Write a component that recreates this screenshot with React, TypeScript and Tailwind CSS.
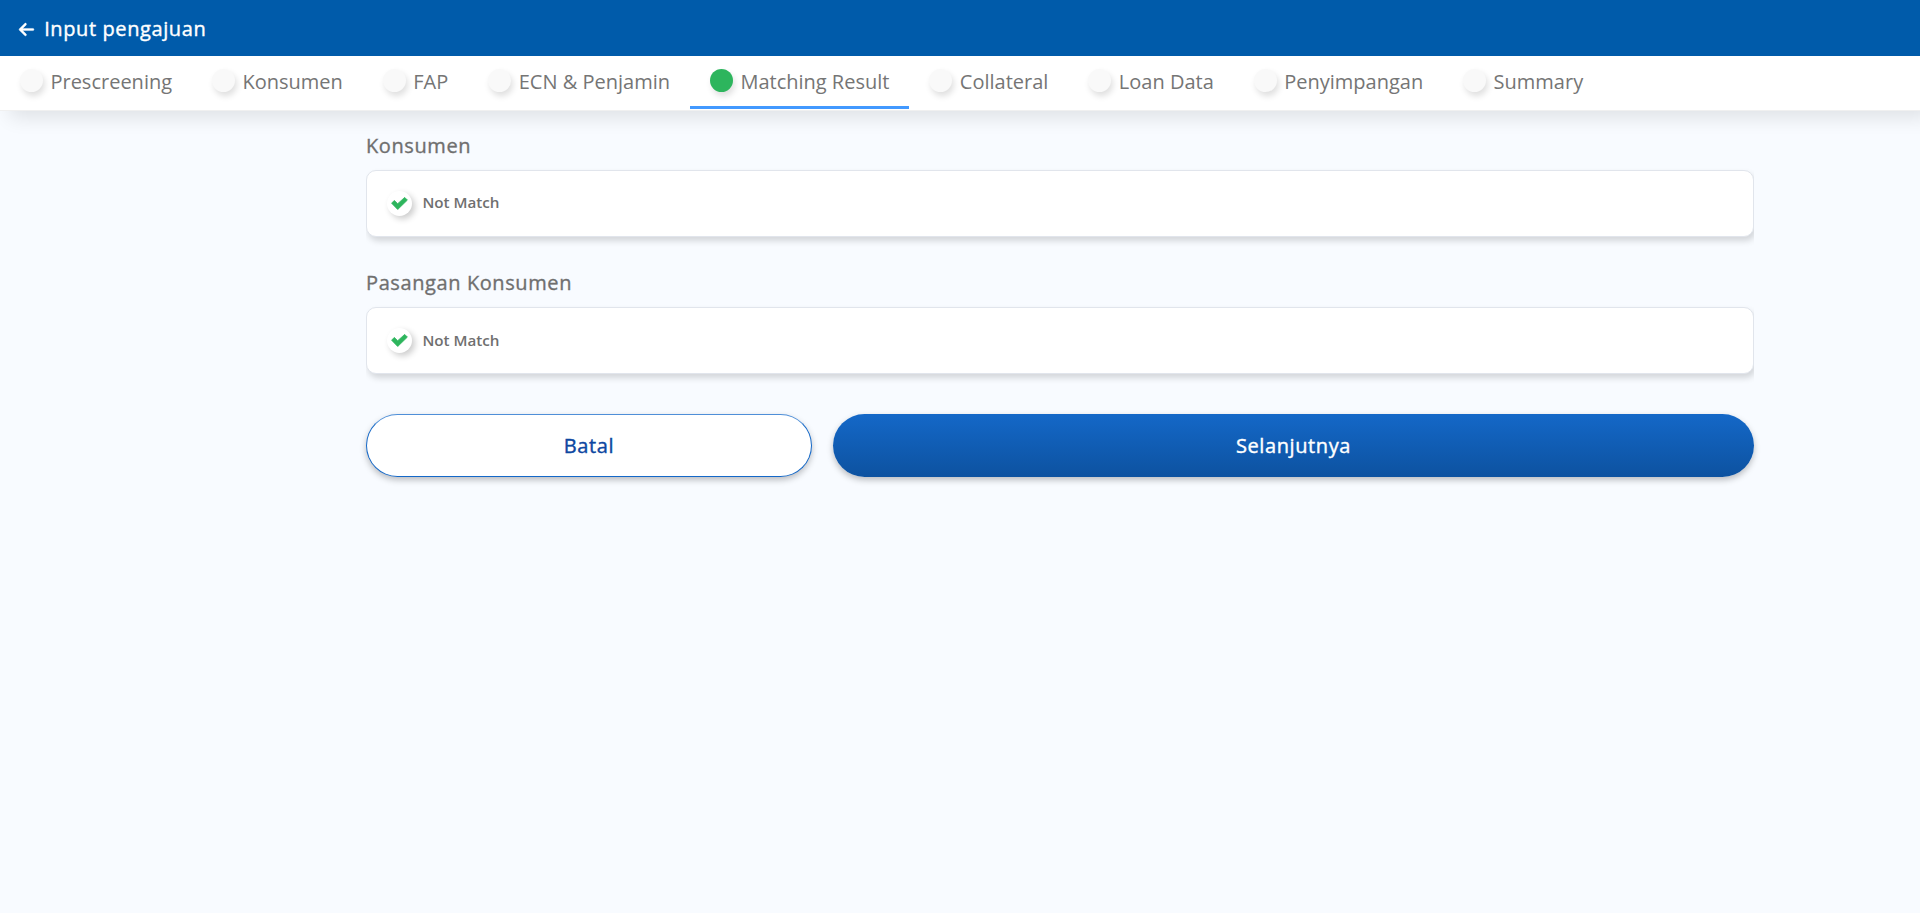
import { FaArrowLeft } from "react-icons/fa6";

const steps = [
  "Prescreening",
  "Konsumen",
  "FAP",
  "ECN & Penjamin",
  "Matching Result",
  "Collateral",
  "Loan Data",
  "Penyimpangan",
  "Summary",
];

function Step({ label, active }: { label: string; active: boolean }) {
  return (
    <div
      className={
        "flex h-[53px] shrink-0 items-center gap-[7.45px] border-b-[3px] px-5 " +
        (active ? "border-[#4299ff]" : "border-transparent")
      }
    >
      <span
        className={
          "mb-px h-[23px] w-[23px] rounded-full shadow-[2px_4px_6px_rgba(0,0,0,0.13)] " +
          (active ? "bg-[#2db55d]" : "bg-[#f9f9f9]")
        }
      />
      <span className="pt-[2px] text-[20px] leading-[30px] text-[#757575]">{label}</span>
    </div>
  );
}

function MatchSection({ title, className, textClass }: { title: string; className: string; textClass: string }) {
  return (
    <section className={className}>
      <h2 className="text-[20px] leading-[30px] tracking-[0.6px] text-[#6f6f6f] [-webkit-text-stroke:0.35px_currentColor]">{title}</h2>
      <div className="mt-[9px] overflow-x-clip">
        <div className="flex h-[67px] items-center rounded-[10px] border border-[#e1e5ec] bg-white pl-5 shadow-[2px_4px_6px_rgba(0,0,0,0.15)]">
          <span className="flex h-[25px] w-[25px] items-center justify-center rounded-full bg-white shadow-[3px_3px_6px_rgba(0,0,0,0.2)]">
            <svg viewBox="0 0 17 13" className="h-[13px] w-[17px]" fill="#2db55d" stroke="#2db55d" strokeWidth="0.8" strokeLinejoin="round">
              <path d="M0.6 6.2 3.3 3.4 6.7 6.7 13.7 0.4 16.4 3.1 6.7 12.5Z" />
            </svg>
          </span>
          <span className={"ml-[10.4px] text-[15.2px] leading-[22px] font-semibold text-[#6f6f6f] " + textClass}>Not Match</span>
        </div>
      </div>
    </section>
  );
}

export default function App() {
  return (
    <div className="min-h-screen bg-[#f8fbff] font-['Open_Sans',sans-serif]">
      <header className="relative z-10 flex h-14 items-center bg-[#005baa] pl-[18px] text-white">
        <FaArrowLeft className="mt-[3px] h-[17px] w-[17px]" stroke="currentColor" strokeWidth={12} />
        <h1 className="ml-[9.2px] pt-0.5 text-[20px] leading-[30px] tracking-[0.6px] [-webkit-text-stroke:0.4px_currentColor]">
          Input pengajuan
        </h1>
      </header>
      <nav className="flex h-[55px] border-b border-[#f0f0f0] bg-white shadow-[10px_6px_20px_0px_rgba(0,0,0,0.11)]">
        {steps.map((s) => (
          <Step key={s} label={s} active={s === "Matching Result"} />
        ))}
      </nav>
      <main className="ml-[366px] w-[1388px] pt-5">
        <MatchSection title="Konsumen" className="h-[137px]" textClass="pb-[3px]" />
        <MatchSection title="Pasangan Konsumen" className="h-[146px]" textClass="pb-px" />
        <div className="flex gap-[21px]">
          <button className="h-[63px] w-[446px] rounded-full border border-[#1468c8] border-t-[#4f8fd8] bg-white text-[20px] tracking-[0.6px] text-[#0d47a1] shadow-[0_3px_6px_rgba(0,0,0,0.25)] [-webkit-text-stroke:0.4px_currentColor]">
            Batal
          </button>
          <button className="h-[63px] flex-1 rounded-full bg-linear-to-b from-[#1468c8] to-[#0d52a0] text-[20px] tracking-[0.6px] text-white shadow-[0_3px_6px_rgba(0,0,0,0.25)] [-webkit-text-stroke:0.4px_currentColor]">
            Selanjutnya
          </button>
        </div>
      </main>
    </div>
  );
}
